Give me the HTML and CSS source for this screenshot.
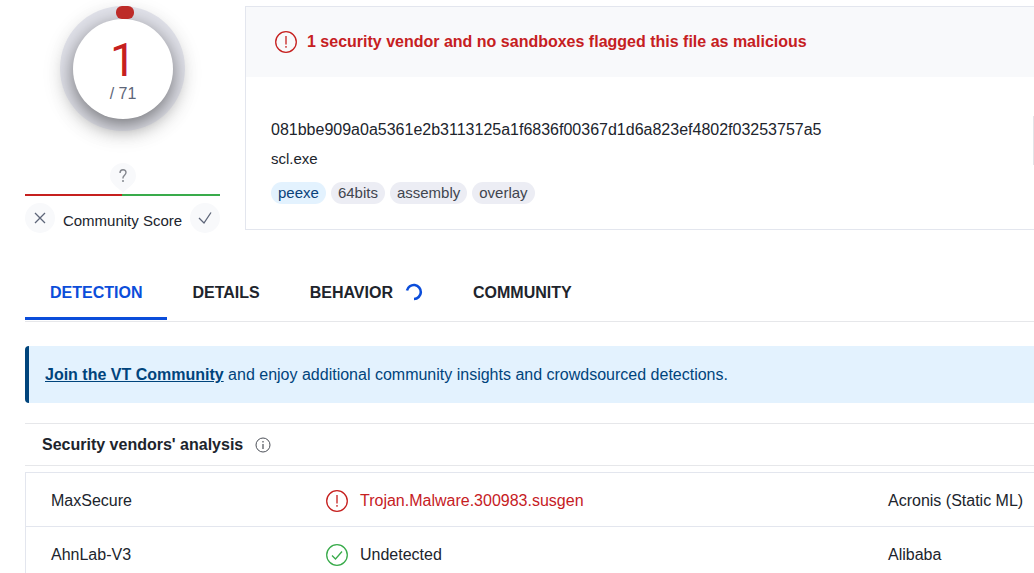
FILE: index.html
```
<!DOCTYPE html>
<html lang="en">
<head>
    <meta charset="UTF-8">
    <meta name="viewport" content="width=device-width, initial-scale=1.0">
    <title>VT - File report</title>
    <link rel="stylesheet" href="styles.css">
</head>
<body>
    <header class="summary">
        <div class="score">
            <div class="gauge">
                <div class="gauge-inner">
                    <span class="positives">1</span>
                    <span class="total">/ 71</span>
                </div>
                <span class="gauge-mark"></span>
            </div>
            <div class="marker">
                <svg width="26" height="30" viewBox="0 0 26 30">
                    <path d="M13 30C11 26 0 22 0 13a13 13 0 0 1 26 0c0 9-11 13-13 17z" fill="#f8f9fb"/>
                    <path d="M10 10C10 8 11.200 6.800 13 6.800s3 1.200 3 2.800c0 2.400-3 2.700-3 5.200v.8" fill="none" stroke="#85888f" stroke-width="1.400"/>
                    <circle cx="13" cy="18" r="1" fill="#85888f"/>
                </svg>
            </div>
            <div class="score-bar"></div>
            <div class="votes">
                <button type="button" class="vote" aria-label="Malicious">
                    <svg width="30" height="30" viewBox="0 0 30 30"><path d="M10 10l10 10M20 10L10 20"/></svg>
                </button>
                <span>Community Score</span>
                <button type="button" class="vote" aria-label="Harmless">
                    <svg width="30" height="30" viewBox="0 0 30 30"><path d="M9 15l5 5L21 9.500"/></svg>
                </button>
            </div>
        </div>
        <section class="card">
            <div class="card-header">
                <svg class="icon" width="22" height="22" viewBox="0 0 22 22">
                    <circle cx="11" cy="11" r="10.300"/>
                    <path d="M11 5v8.500M11 15v1.700"/>
                </svg>
                <span>1 security vendor and no sandboxes flagged this file as malicious</span>
            </div>
            <div class="card-body">
                <div class="file">
                    <div class="hash">081bbe909a0a5361e2b3113125a1f6836f00367d1d6a823ef4802f03253757a5</div>
                    <div class="name">scl.exe</div>
                    <div class="tags">
                        <a href="#" class="tag blue">peexe</a>
                        <a href="#" class="tag">64bits</a>
                        <a href="#" class="tag">assembly</a>
                        <a href="#" class="tag">overlay</a>
                    </div>
                </div>
                <div class="divider"></div>
            </div>
        </section>
    </header>

    <nav class="tabs">
        <a href="#" class="tab active">DETECTION</a>
        <a href="#" class="tab">DETAILS</a>
        <a href="#" class="tab">BEHAVIOR
            <svg width="18" height="18" viewBox="0 0 18 18"><path d="M2 7.500A7 7 0 1 1 9 16" fill="none" stroke="#0b4dda" stroke-width="2.600"/></svg>
        </a>
        <a href="#" class="tab">COMMUNITY</a>
    </nav>

    <main class="detection">
        <p class="banner"><a href="#">Join the VT Community</a> and enjoy additional community insights and crowdsourced detections.</p>
        <h2 class="heading">
            Security vendors' analysis
            <svg width="16" height="16" viewBox="0 0 16 16">
                <circle cx="8" cy="8" r="7" fill="none" stroke="#4d5159"/>
                <path d="M8 7v5M8 4v1.500" stroke="#4d5159" stroke-width="1.200"/>
            </svg>
        </h2>
        <table class="vendors">
            <colgroup>
                <col class="col-name">
                <col>
                <col class="col-next">
            </colgroup>
            <tr>
                <td>MaxSecure</td>
                <td>
                    <span class="verdict malicious">
                        <svg class="icon" width="22" height="22" viewBox="0 0 22 22">
                            <circle cx="11" cy="11" r="10.300"/>
                            <path d="M11 5v8.500M11 15v1.700"/>
                        </svg>
                        Trojan.Malware.300983.susgen
                    </span>
                </td>
                <td>Acronis (Static ML)</td>
            </tr>
            <tr>
                <td>AhnLab-V3</td>
                <td>
                    <span class="verdict clean">
                        <svg class="icon" width="22" height="22" viewBox="0 0 22 22">
                            <circle cx="11" cy="11" r="10.300"/>
                            <path d="M6 11.500l3.500 3.500L16 7.500"/>
                        </svg>
                        <span>Undetected</span>
                    </span>
                </td>
                <td>Alibaba</td>
            </tr>
        </table>
    </main>
</body>
</html>
```
FILE: styles.css
```
* {
    box-sizing: border-box;
}
body {
    margin: 0;
    padding: 6px 0 0 25px;
    background-color: white;
    color: #20242c;
    font-family: "Liberation Sans", Arial, sans-serif;
    font-size: 16px;
    line-height: 20px;
}
svg {
    display: block;
    flex-shrink: 0;
}
.summary {
    display: flex;
    align-items: flex-start;
    gap: 25px;
}
.score {
    width: 195px;
    flex-shrink: 0;
    display: flex;
    flex-direction: column;
    align-items: center;
}
.gauge {
    position: relative;
    width: 125px;
    height: 125px;
    border-radius: 50%;
    padding: 13px;
    background-color: #e1e2ea;
    box-shadow: 0 5px 20px rgba(0, 0, 0, 0.1);
}
.gauge-inner {
    display: flex;
    flex-direction: column;
    align-items: center;
    width: 100px;
    height: 100px;
    padding-top: 17px;
    border-radius: 50%;
    background-color: white;
    box-shadow: 0 6px 20px rgba(0, 0, 0, 0.5);
}
.gauge-mark {
    position: absolute;
    top: 0;
    left: 56px;
    width: 18px;
    height: 13px;
    border-radius: 6px;
    background-color: #bd2b28;
}
.positives {
    color: #c6201f;
    font-family: Roboto, sans-serif;
    font-size: 46px;
    line-height: 48px;
}
.total {
    color: #5d6578;
}
.marker {
    margin-top: 32px;
}
.score-bar {
    align-self: stretch;
    height: 2px;
    margin-top: 1px;
    background: linear-gradient(to right, #c6201f 50%, #39ab4b 50%);
}
.votes {
    display: flex;
    align-self: stretch;
    justify-content: space-between;
    align-items: center;
    margin-top: 7px;
    font-size: 15px;
}
.votes span {
    padding-top: 6px;
}
.vote {
    width: 30px;
    height: 30px;
    padding: 0;
    border: none;
    border-radius: 50%;
    background-color: #f8f9fb;
    cursor: pointer;
}
.vote path {
    fill: none;
    stroke: #5d6578;
    stroke-width: 1.3;
}
.card {
    flex: 1;
    min-width: 0;
    border: 1px solid #e3e6ee;
    border-right: none;
}
.card-header {
    display: flex;
    align-items: center;
    gap: 10px;
    padding: 24px 0 24px 29px;
    background-color: #f8f9fb;
    color: #c6201f;
    font-weight: bold;
    line-height: 22px;
}
.icon {
    fill: none;
    stroke: currentColor;
    stroke-width: 1.3;
}
.card-body {
    display: flex;
    justify-content: space-between;
    padding: 39px 0 25px 25px;
}
.file {
    padding-top: 4px;
}
.name {
    margin-top: 9px;
    font-size: 15px;
}
.tags {
    display: flex;
    gap: 5px;
    margin-top: 13px;
    font-size: 15px;
}
.tag {
    padding: 1px 7px;
    border-radius: 11px;
    background-color: #ecedf4;
    color: #41454f;
    text-decoration: none;
}
.tag.blue {
    background-color: #e3f2fe;
    color: #0a4179;
}
.divider {
    width: 1px;
    height: 49px;
    background-color: #e3e4e8;
}
.tabs {
    display: flex;
    margin-top: 31px;
    border-bottom: 1px solid #e6e7ea;
}
.tab {
    display: flex;
    gap: 12px;
    padding: 19px 25px 14px;
    border-bottom: 3px solid transparent;
    margin-bottom: 1px;
    color: #20242c;
    font-weight: bold;
    text-decoration: none;
}
.tab.active {
    border-bottom-color: #0b4dda;
    color: #0b4dda;
}
.banner {
    margin: 24px 0 20px;
    padding: 19px 16px 18px;
    border-left: 4px solid #00447c;
    border-radius: 4px 0 0 4px;
    background-color: #e3f2fe;
    color: #00447c;
}
.banner a {
    color: inherit;
    font-weight: bold;
}
.heading {
    display: flex;
    align-items: center;
    gap: 12px;
    margin: 0 0 6px;
    padding: 11px 17px 10px;
    border: solid #e6e7ea;
    border-width: 1px 0;
    font-size: 16px;
}
.vendors {
    width: 100%;
    table-layout: fixed;
    border-collapse: separate;
    border-spacing: 0;
    border-left: 1px solid #e3e6ee;
}
.vendors td {
    height: 54px;
    padding: 2px 0 0 25px;
    border-top: 1px solid #e3e6ee;
    white-space: nowrap;
}
.col-name {
    width: 275px;
}
.col-next {
    width: 171px;
}
.verdict {
    display: flex;
    align-items: center;
    gap: 12px;
}
.malicious {
    color: #c6201f;
}
.clean {
    color: #39ab4b;
}
.clean span {
    color: #20242c;
}
```
